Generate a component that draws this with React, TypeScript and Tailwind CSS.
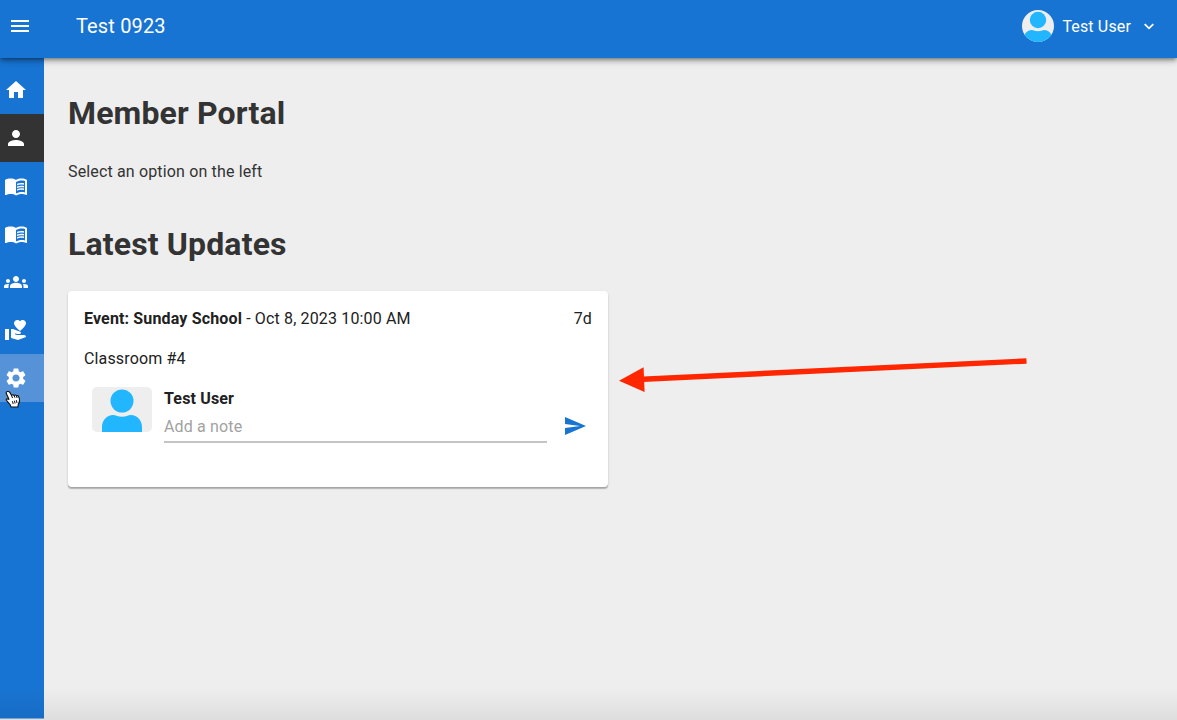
import React from "react";
import {
  MdGroups,
  MdHome,
  MdMenu,
  MdMenuBook,
  MdPerson,
  MdSend,
  MdSettings,
  MdVolunteerActivism,
} from "react-icons/md";

const navItems = [
  { label: "Home", Icon: MdHome, tone: "" },
  { label: "People", Icon: MdPerson, tone: "bg-[#333333]" },
  { label: "Lessons", Icon: MdMenuBook, tone: "" },
  { label: "Bible", Icon: MdMenuBook, tone: "" },
  { label: "Groups", Icon: MdGroups, tone: "" },
  { label: "Donations", Icon: MdVolunteerActivism, tone: "" },
  { label: "Settings", Icon: MdSettings, tone: "bg-[#5592d8]" },
];

function PersonShape({ className }: { className: string }) {
  return (
    <svg viewBox="0 0 60 45" className={className} preserveAspectRatio="xMidYMid slice" aria-hidden="true">
      <rect width="60" height="45" fill="#eeeeee" />
      <circle cx="30" cy="14" r="11.5" fill="#22b6fe" />
      <path d="M10 45V40C10 33 15 28 21 28C24 28 26 29.8 30 29.8S36 28 39 28C45 28 50 33 50 40V45Z" fill="#22b6fe" />
    </svg>
  );
}

function Header() {
  return (
    <header className="relative z-10 flex h-[58px] items-start bg-[#1874d2] pl-2 pr-[18px] pt-2.5 text-white shadow-[0_2px_4px_-1px_rgba(0,0,0,0.4),0_4px_5px_rgba(0,0,0,0.14),0_1px_10px_rgba(0,0,0,0.12)]">
      <div className="flex h-8 w-full items-center">
        <MdMenu className="size-6 shrink-0" />
        <span className="ml-11 text-[20px] leading-8 tracking-[0.15px]">Test 0923</span>
        <div className="ml-auto flex items-center">
          <PersonShape className="size-8 rounded-full" />
          <span className="ml-2 pt-px text-base tracking-[0.15px]">Test User</span>
          <svg className="ml-2 size-5" viewBox="0 0 20 20" fill="none" aria-hidden="true">
            <path d="M5.7 8.1L10 12.3L14.3 8.1" stroke="currentColor" strokeWidth="1.8" />
          </svg>
        </div>
      </div>
    </header>
  );
}

function Sidebar() {
  return (
    <nav className="w-11 shrink-0 border-b border-[#7db1e6] bg-[#1874d2] pt-2 text-white">
      {navItems.map(({ label, Icon, tone }) => (
        <div key={label} title={label} className={`flex h-12 items-center pl-1 ${tone}`}>
          <Icon className="size-6" />
        </div>
      ))}
    </nav>
  );
}

function UpdateCard() {
  return (
    <section className="mt-[23px] h-[196px] w-[540px] rounded bg-white px-4 pt-4 text-[#212121] shadow-[0_2px_1px_-0.5px_rgba(0,0,0,0.2),0_1px_1px_rgba(0,0,0,0.08),0_1px_3px_rgba(0,0,0,0.1)]">
      <div className="flex justify-between leading-6">
        <span>
          <b>Event: Sunday School</b> - Oct 8, 2023 10:00 AM
        </span>
        <span>7d</span>
      </div>
      <div className="mt-4 leading-6">Classroom #4</div>
      <div className="mt-4 flex pl-2">
        <PersonShape className="h-[45px] w-[60px] rounded-[5px]" />
        <div className="ml-3 w-[383px]">
          <b className="block leading-6">Test User</b>
          <div className="h-8 border-b-2 border-[#c4c4c4] pt-1 leading-6 text-[#a2a2a2]">Add a note</div>
        </div>
        <MdSend className="ml-4 mt-[27px] size-6 text-[#1874d2]" />
      </div>
    </section>
  );
}

function Pointer() {
  return (
    <svg className="absolute left-[5px] top-[390px] z-20" width="16" height="18" viewBox="0 0 16 18" aria-hidden="true">
      <path
        d="M3 1.5C1.8 1.3.8 2.2 1.3 3.6L4.1 9.6C2.6 8.5 1.2 8.7 1.2 9.8C1.2 10.5 2 11 2.7 11.8L5.2 14.7L6 17H13L13.2 14.5C14.7 12.2 15 10.6 14.4 8.8L13.7 6.7C13.2 5.4 11.9 5.3 11.5 6C11 4.8 9.6 4.7 9.1 5.6C8.6 4.6 7.2 4.5 6.6 5.5L4.8 2.4C4.3 1.7 3.7 1.4 3 1.5Z"
        fill="#fff"
        stroke="#111"
        strokeWidth="1.1"
      />
      <path d="M6.5 5.4L7.6 8.1M9.1 5.6L10 7.7M11.5 6L12.2 8M7.4 11.2L8.2 14M9.4 10.7L10.1 13.5M11.3 10.1L12 13" stroke="#111" fill="none" />
    </svg>
  );
}

function CalloutArrow() {
  return (
    <svg className="absolute left-[615px] top-[350px]" width="416" height="48" viewBox="0 0 416 48" aria-hidden="true">
      <path d="M28 29.2L411.5 11" stroke="#ff2600" strokeWidth="5.4" />
      <path d="M4 30.8L28.6 17.2L29.6 42Z" fill="#ff2600" />
    </svg>
  );
}

export default function App() {
  return (
    <div className="relative flex h-[720px] w-[1177px] flex-col overflow-hidden bg-[#eeeeee] font-[Roboto,sans-serif] text-base tracking-[0.15px] text-[#333333]">
      <Header />
      <div className="flex h-[661px]">
        <Sidebar />
        <main className="flex-1 pl-6 pt-[31px]">
          <h1 className="text-[32px] font-bold leading-[48px] tracking-[0.15px]">Member Portal</h1>
          <p className="mt-[23px] leading-6">Select an option on the left</p>
          <h1 className="mt-9 text-[32px] font-bold leading-[48px] tracking-[0.15px]">Latest Updates</h1>
          <UpdateCard />
        </main>
      </div>
      <div className="pointer-events-none absolute inset-x-0 bottom-0 h-8 bg-linear-to-b from-transparent to-black/7" />
      <Pointer />
      <CalloutArrow />
    </div>
  );
}
